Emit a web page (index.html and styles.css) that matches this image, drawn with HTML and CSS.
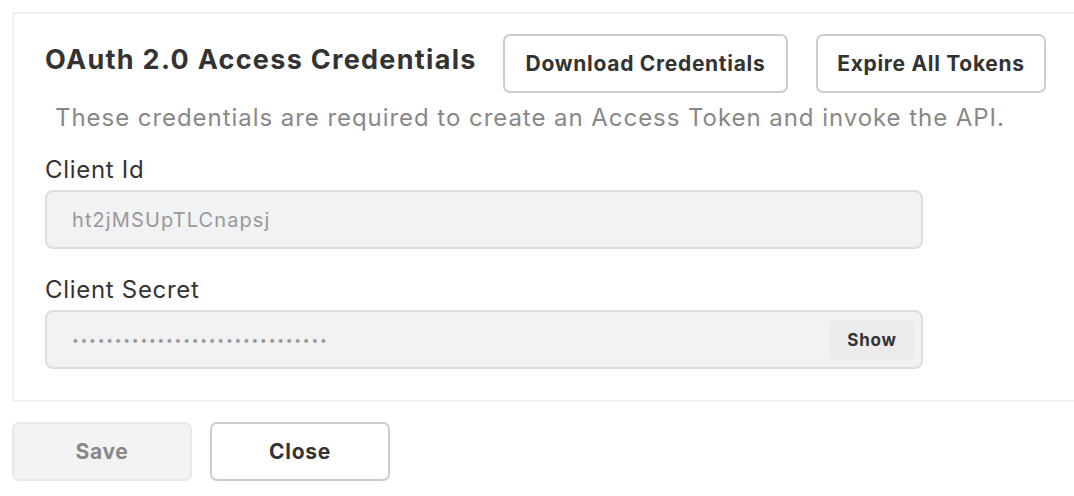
FILE: index.html
```html
<!DOCTYPE html>
<html>
<head>
<meta charset="utf-8">
<link rel="stylesheet" href="styles.css">
</head>
<body>
<div class="panel">
  <div class="header">
    <h2 class="title">OAuth 2.0 Access Credentials</h2>
    <button class="btn btn-outline btn-download">Download Credentials</button>
    <button class="btn btn-outline btn-expire">Expire All Tokens</button>
  </div>
  <p class="desc">These credentials are required to create an Access Token and invoke the API.</p>
  <div class="field">
    <label class="label">Client Id</label>
    <div class="input"><span class="value">ht2jMSUpTLCnapsj</span></div>
  </div>
  <div class="field">
    <label class="label">Client Secret</label>
    <div class="input"><span class="dots">••••••••••••••••••••••••••••••</span><button class="show">Show</button></div>
  </div>
</div>
<div class="actions">
  <button class="btn btn-save">Save</button>
  <button class="btn btn-outline btn-close">Close</button>
</div>
</body>
</html>
```

FILE: styles.css
```css
html, body {
  margin: 0;
  padding: 0;
  background: #fff;
  overflow: hidden;
}
body {
  font-family: Inter, Lato, sans-serif;
  color: #333;
}
.panel {
  margin: 12px 0 0 12px;
  border: 2px solid #f0f0f0;
  border-right: none;
  padding: 20px 0 31px 31px;
}
.header {
  display: flex;
  align-items: flex-start;
}
.title {
  flex: none;
  width: 430px;
  margin: 11px 28px 0 0;
  font-size: 27px;
  font-weight: 700;
  line-height: 30px;
  letter-spacing: 1.3px;
  white-space: nowrap;
  color: #333;
}
.btn {
  font-family: inherit;
  font-weight: 700;
  font-size: 21px;
  letter-spacing: 0.7px;
  height: 59px;
  border-radius: 7px;
  background: #fff;
  color: #333;
  cursor: pointer;
  padding: 0;
}
.btn-outline {
  border: 2px solid #cdcdcd;
}
.btn-download {
  width: 285px;
}
.btn-expire {
  width: 230px;
  margin-left: 28px;
}
.desc {
  margin: 8px 0 0 10px;
  font-size: 24px;
  font-weight: 400;
  line-height: 34px;
  letter-spacing: 0.95px;
  white-space: nowrap;
  color: #888;
}
.field {
  margin-top: 21px;
  width: 878px;
}
.field + .field {
  margin-top: 27px;
}
.label {
  display: block;
  font-size: 24px;
  line-height: 28px;
  letter-spacing: 0.7px;
  color: #333;
  margin-bottom: 6px;
}
.input {
  box-sizing: border-box;
  height: 59px;
  border: 2px solid #dedede;
  border-radius: 8px;
  background: #f1f2f4;
  display: flex;
  align-items: center;
  padding: 0 7px 0 25px;
}
.value {
  font-size: 20px;
  letter-spacing: 1.1px;
  color: #999;
}
.dots {
  flex: 1;
  font-size: 12px;
  color: #999;
  letter-spacing: 1.8px;
}
.show {
  width: 84px;
  height: 40px;
  border: none;
  border-radius: 6px;
  background: #ebebeb;
  font-family: inherit;
  font-weight: 700;
  font-size: 17px;
  letter-spacing: 0.8px;
  color: #333;
  padding: 0;
}
.actions {
  display: flex;
  gap: 18px;
  margin: 20px 0 0 12px;
}
.btn-save {
  width: 180px;
  background: #f3f3f3;
  border: 2px solid #e6e8ea;
  color: #888;
}
.btn-close {
  width: 180px;
}
```
